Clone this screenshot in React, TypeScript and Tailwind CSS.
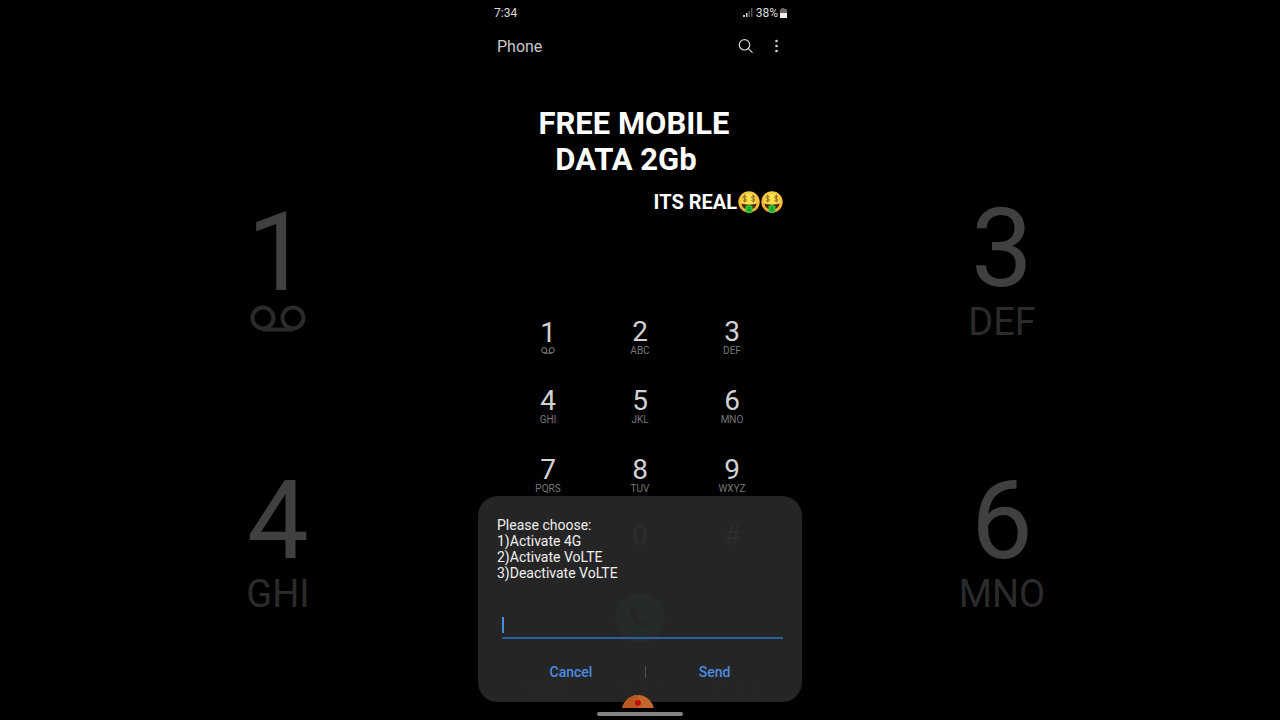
import { useId } from "react";
import clsx from "clsx";

const keys = [
  { digit: "1", letters: "" },
  { digit: "2", letters: "ABC" },
  { digit: "3", letters: "DEF" },
  { digit: "4", letters: "GHI" },
  { digit: "5", letters: "JKL" },
  { digit: "6", letters: "MNO" },
  { digit: "7", letters: "PQRS" },
  { digit: "8", letters: "TUV" },
  { digit: "9", letters: "WXYZ" },
];

function Voicemail({ className }: { className?: string }) {
  return (
    <svg viewBox="0 0 56 28" fill="none" stroke="currentColor" strokeWidth="4" className={className} aria-hidden="true">
      <circle cx="13" cy="13" r="10.5" />
      <circle cx="43" cy="13" r="10.5" />
      <path d="M13 24.5h30" />
    </svg>
  );
}

function MoneyFace() {
  const id = useId();
  return (
    <svg viewBox="0 0 44 44" className="size-[22px]" role="img" aria-label="Money-mouth face">
      <defs>
        <radialGradient id={id} cx="0.5" cy="0.4" r="0.6">
          <stop offset="0.4" stopColor="#ffdf4a" />
          <stop offset="1" stopColor="#efa22d" />
        </radialGradient>
      </defs>
      <circle cx="22" cy="22" r="21.5" fill={`url(#${id})`} />
      <g fill="none" stroke="#7a5a20" strokeWidth="1.8" strokeLinecap="round">
        <path d="M17 12c-2-3-7-2-7 1s7 2 7 5-5 4-7 1M13.5 8v14" />
        <path d="M34 12c-2-3-7-2-7 1s7 2 7 5-5 4-7 1M30.5 8v14" />
      </g>
      <path d="M7 25c8 3 22 3 30 0-1 8-7 12-15 12S8 33 7 25z" fill="#4a2b13" />
      <path d="M15 30c4-2 10-2 14 0v10c0 3-3 4-7 4s-7-1-7-4z" fill="#31c63c" />
      <path d="M25 34c-2-2-6-1-5 1s5 1 5 3-4 2-6 0" fill="none" stroke="#087c20" strokeWidth="1.8" />
    </svg>
  );
}

// Enlarged, dimmed keys on either side of the phone
function SideKeys({ items, side }: { items: typeof keys; side: "left" | "right" }) {
  return (
    <aside
      aria-hidden="true"
      className={clsx("hidden flex-col gap-[118px] pt-[195px] lg:flex", side === "left" ? "items-end pr-[120px]" : "items-start pl-[120px]")}
    >
      {items.map((key) => (
        <div key={key.digit} className={clsx("flex h-[154px] w-40 flex-col items-center", !key.letters && "pt-1")}>
          <span className="text-[110px] leading-[108px] text-[#404040]">{key.digit}</span>
          {key.letters ? (
            <span className="text-[38px] leading-[38px] text-[#2b2b2b]">{key.letters}</span>
          ) : (
            <Voicemail className="-mt-0.5 h-7 w-14 text-[#2b2b2b]" />
          )}
        </div>
      ))}
    </aside>
  );
}

function StatusBar() {
  return (
    <div className="flex h-[26px] items-center justify-between pr-[15px] pl-4 text-xs text-[#dcdcdc]">
      <span>7:34</span>
      <div className="flex items-center">
        <svg viewBox="0 0 10 10" className="mr-[3px] size-[10px]" aria-hidden="true">
          <path d="M0 7h2v2H0zM3 5h1.5v4H3z" fill="#ccc" />
          <path d="M5.5 3H7v6H5.5zM8 0h1.5v9H8z" fill="#555" />
        </svg>
        <span>38%</span>
        <svg viewBox="0 0 8 10" className="ml-px h-[10px] w-2" aria-hidden="true">
          <path d="M2.5 0h3v1H8v5H1V1h1.5z" fill="#666" />
          <path d="M1 5h7v5H1z" fill="#eee" />
        </svg>
      </div>
    </div>
  );
}

function Header() {
  return (
    <header className="flex h-[42px] items-center justify-between pr-[18px] pl-[19px]">
      <span className="text-base text-[#c8c8c8]">Phone</span>
      <div className="flex items-center gap-[14px] text-[#d6d6d6]">
        <button type="button" aria-label="Search">
          <svg viewBox="0 0 16 16" fill="none" stroke="currentColor" strokeWidth="1.2" strokeLinecap="round" className="size-4">
            <circle cx="6.5" cy="5.8" r="5.2" />
            <path d="M10.3 9.6l3.9 3.8" />
          </svg>
        </button>
        <button type="button" aria-label="More options">
          <svg viewBox="0 0 16 16" fill="currentColor" className="size-4">
            <circle cx="8.5" cy="2" r="1.3" />
            <circle cx="8.5" cy="7" r="1.3" />
            <circle cx="8.5" cy="12" r="1.3" />
          </svg>
        </button>
      </div>
    </header>
  );
}

function Keypad() {
  return (
    <div className="mx-6 mt-[104px] grid grid-cols-3 gap-y-[31px]">
      {keys.map((key) => (
        <button key={key.digit} type="button" className={clsx("flex h-[38px] flex-col items-center", !key.letters && "pt-px")}>
          <span className="text-[28px] leading-7 text-[#d2d2d2]">{key.digit}</span>
          {key.letters ? (
            <span className="text-[10px] leading-[10px] text-[#777]">{key.letters}</span>
          ) : (
            <Voicemail className="h-[7px] w-[14px] text-[#858585]" />
          )}
        </button>
      ))}
      <button type="button" className="col-start-2 h-[38px] pb-4 text-[28px] leading-[22px] text-[#a8a8a8]">0</button>
      <button type="button" className="h-[38px] pb-4 text-[28px] leading-[22px] text-[#a8a8a8]">#</button>
    </div>
  );
}

function UssdDialog() {
  return (
    <form
      role="dialog"
      aria-label="Carrier message"
      onSubmit={(e) => e.preventDefault()}
      className="absolute inset-x-0 top-[496px] flex h-[206px] flex-col rounded-[20px] bg-[#272727]/96 px-[19px] pt-[21px]"
    >
      <label htmlFor="reply" className="text-sm leading-4 whitespace-pre-line text-[#f0f0f0]">
        {"Please choose:\n1)Activate 4G\n2)Activate VoLTE\n3)Deactivate VoLTE"}
      </label>
      <div className="mt-7 ml-[5px] flex h-[30px] items-center border-b-2 border-[#2860a0] pt-1">
        <span className="h-4 w-[2px] bg-[#4b8be0]" />
        <input id="reply" type="text" className="h-full min-w-0 flex-1 bg-transparent text-sm text-white caret-[#4b8be0] outline-none" />
      </div>
      <div className="mt-[23px] flex h-5 items-center text-sm font-medium text-[#4b8be0]">
        <button type="button" className="w-[148px]">Cancel</button>
        <span className="h-3 w-px bg-[#555]" />
        <button type="submit" className="flex-1">Send</button>
      </div>
    </form>
  );
}

export default function App() {
  return (
    <div className="grid min-h-screen justify-center bg-black font-['Roboto',sans-serif] lg:grid-cols-[1fr_324px_1fr]">
      <SideKeys items={[keys[0], keys[3]]} side="left" />

      <main className="relative flex flex-col">
        <StatusBar />
        <Header />

        {/* Caption */}
        <h1 className="mt-[38px] mr-3 text-center text-[31px] leading-9 font-bold text-white">
          FREE MOBILE
          <span className="block pr-4">DATA 2Gb</span>
        </h1>
        <p className="mt-3 flex h-6 items-center justify-end gap-px pr-[19px] text-xl font-bold text-white">
          ITS REAL
          <MoneyFace />
          <MoneyFace />
        </p>

        <Keypad />

        <button type="button" aria-label="Call" className="mt-[30px] flex size-[50px] items-center justify-center self-center rounded-full bg-[#1c8a60]">
          <svg viewBox="0 0 24 24" fill="#000" className="size-6">
            <path d="M6 2l4 5-2 3c1 3 3 5 6 6l3-2 5 4c0 3-2 4-4 4C10 22 2 14 2 6c0-2 1-4 4-4z" />
          </svg>
        </button>
        <nav className="mx-4 mt-9 grid grid-cols-3 text-center text-xs leading-[14px] text-[#444]">
          <a href="#keypad" className="font-bold underline">Keypad</a>
          <a href="#recents">Recents</a>
          <a href="#contacts">Contacts</a>
        </nav>

        <UssdDialog />

        {/* Recorder bubble peeking over the navigation bar */}
        <div className="absolute top-[695px] left-[144px] h-[13px] w-8 overflow-hidden">
          <svg viewBox="0 0 32 32" className="size-8" aria-hidden="true">
            <circle cx="16" cy="16" r="16" fill="#c4662a" />
            <path d="M0 16A16 16 0 0 1 16 0v32z" fill="#b95820" />
            <circle cx="16" cy="8" r="3" fill="#c40d0d" />
          </svg>
        </div>
        <div className="mt-[19px] mb-1 h-1 w-[86px] self-center rounded-full bg-[#858585]" />
      </main>

      <SideKeys items={[keys[2], keys[5]]} side="right" />
    </div>
  );
}
